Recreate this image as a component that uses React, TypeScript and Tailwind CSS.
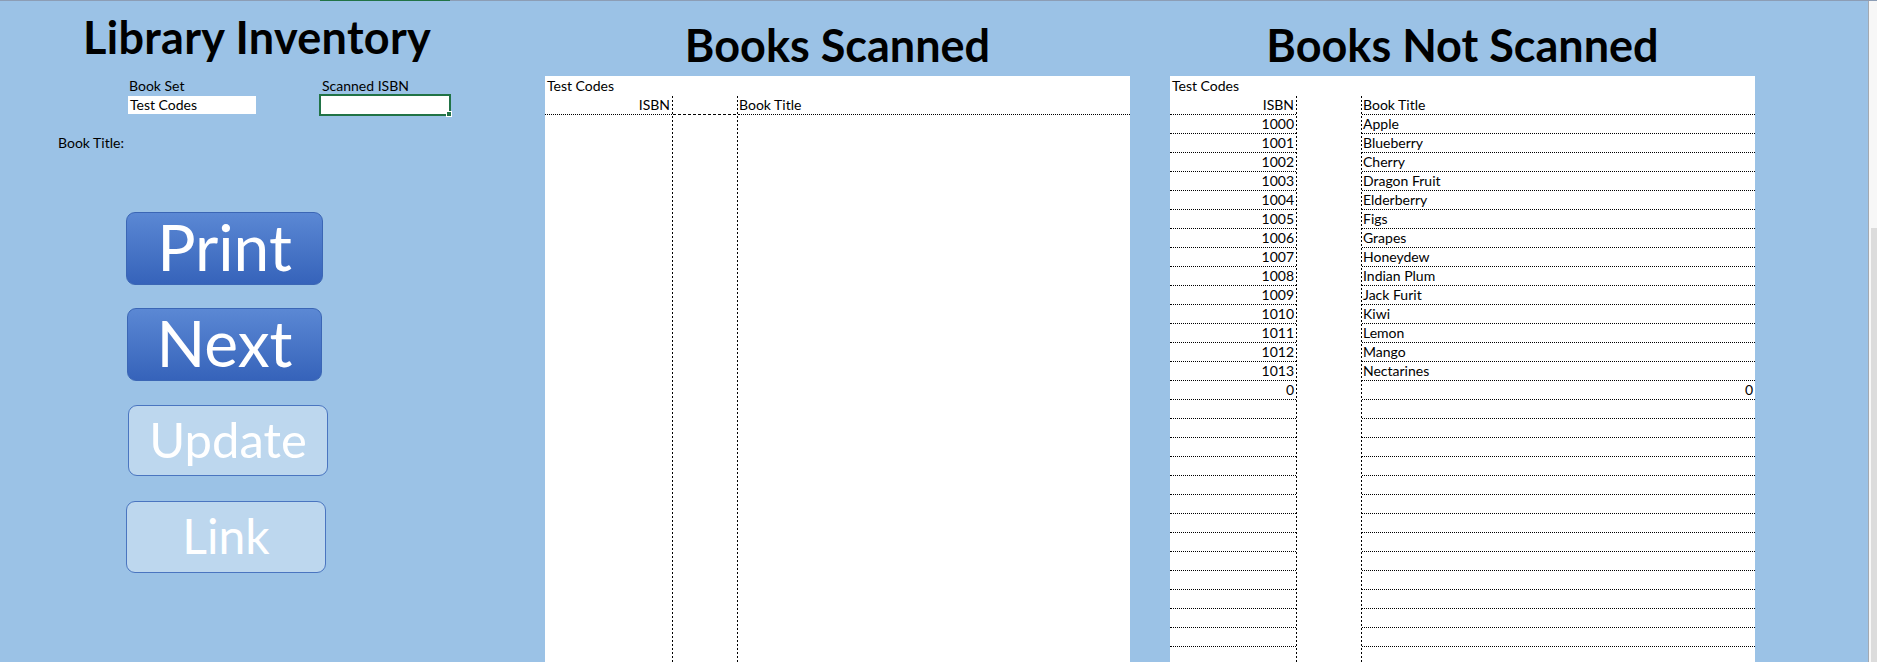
import React from "react";

const rows: [string, string][] = [
  ["1000", "Apple"],
  ["1001", "Blueberry"],
  ["1002", "Cherry"],
  ["1003", "Dragon Fruit"],
  ["1004", "Elderberry"],
  ["1005", "Figs"],
  ["1006", "Grapes"],
  ["1007", "Honeydew"],
  ["1008", "Indian Plum"],
  ["1009", "Jack Furit"],
  ["1010", "Kiwi"],
  ["1011", "Lemon"],
  ["1012", "Mango"],
  ["1013", "Nectarines"],
];

function VLine() {
  return (
    <div className="w-px shrink-0 [background-image:repeating-linear-gradient(to_bottom,#000_0px,#000_2px,transparent_2px,transparent_4px)]" />
  );
}

function Cell({ children, align }: { children?: React.ReactNode; align: "left" | "right" }) {
  return (
    <div
      className={
        align === "right"
          ? "h-[19px] shrink-0 border-b border-dotted border-black pr-[2px] text-right leading-[18px]"
          : "h-[19px] shrink-0 border-b border-dotted border-black pl-[1px] leading-[18px]"
      }
    >
      {children}
    </div>
  );
}

function BooksScanned() {
  return (
    <div className="flex w-[585px] shrink-0 flex-col">
      <div className="h-[75px] shrink-0 pt-[22px] text-center text-[45px] font-bold leading-[45px]">
        Books Scanned
      </div>
      <div className="flex flex-1 flex-col bg-white">
        <div className="h-[20px] shrink-0 pl-[2px] leading-[19px]">Test Codes</div>
        <div className="flex flex-1">
          <div className="w-[127px] shrink-0">
            <Cell align="right">ISBN</Cell>
          </div>
          <VLine />
          <div className="w-[64px] shrink-0">
            <div className="flex h-[19px] items-end">
              <div className="h-px w-full [background-image:repeating-linear-gradient(to_right,#000_0px,#000_3px,transparent_3px,transparent_5px)]" />
            </div>
          </div>
          <VLine />
          <div className="flex-1">
            <Cell align="left">Book Title</Cell>
          </div>
        </div>
      </div>
    </div>
  );
}

function BooksNotScanned() {
  const empty = Array.from({ length: 16 });
  return (
    <div className="flex w-[585px] shrink-0 flex-col">
      <div className="h-[75px] shrink-0 pt-[22px] text-center text-[45px] font-bold leading-[45px]">
        Books Not Scanned
      </div>
      <div className="flex flex-1 flex-col overflow-hidden bg-white">
        <div className="h-[20px] shrink-0 pl-[2px] leading-[19px]">Test Codes</div>
        <div className="flex flex-1">
          <div className="flex w-[126px] shrink-0 flex-col">
            <Cell align="right">ISBN</Cell>
            {rows.map(([n]) => (
              <Cell key={n} align="right">
                {n}
              </Cell>
            ))}
            <Cell align="right">0</Cell>
            {empty.map((_, i) => (
              <Cell key={i} align="right" />
            ))}
          </div>
          <VLine />
          <div className="w-[64px] shrink-0" />
          <VLine />
          <div className="flex flex-1 flex-col">
            <Cell align="left">Book Title</Cell>
            {rows.map(([n, t]) => (
              <Cell key={n} align="left">
                {t}
              </Cell>
            ))}
            <Cell align="right">0</Cell>
            {empty.map((_, i) => (
              <Cell key={i} align="left" />
            ))}
          </div>
        </div>
      </div>
    </div>
  );
}

function LeftPanel() {
  return (
    <div className="flex w-[545px] shrink-0 flex-col">
      <div className="h-[75px] shrink-0 pl-[83px] pt-[14px] text-[45px] font-bold leading-[45px] tracking-[0.3px]">
        Library Inventory
      </div>
      <div className="flex h-[19px] shrink-0 leading-[19px]">
        <div className="w-[193px] pl-[129px]">Book Set</div>
        <div className="pl-[129px]">Scanned ISBN</div>
      </div>
      <div className="flex h-[19px] shrink-0 items-start">
        <div className="ml-[128px] mt-px h-[18px] w-[128px] bg-white pl-[2px] leading-[18px]">Test Codes</div>
        <div className="relative ml-[63px] -mt-px h-[22px] w-[132px] border-2 border-[#217346] bg-white">
          <div className="absolute -bottom-[3px] -right-[3px] h-[6px] w-[6px] border border-white bg-[#217346]" />
        </div>
      </div>
      <div className="h-[19px] shrink-0" />
      <div className="h-[19px] shrink-0 pl-[58px] leading-[19px]">Book Title:</div>
      <div className="ml-[126px] mt-[60px] flex h-[73px] w-[197px] items-center justify-center rounded-[9px] border border-[#3b66b5] bg-gradient-to-b from-[#5b88d4] to-[#3663ba] pb-[3px] text-[64px] leading-none text-white">
        Print
      </div>
      <div className="ml-[127px] mt-[23px] flex h-[73px] w-[195px] items-center justify-center rounded-[9px] border border-[#3b66b5] bg-gradient-to-b from-[#5b88d4] to-[#3663ba] pb-[3px] text-[64px] leading-none text-white">
        Next
      </div>
      <div className="ml-[128px] mt-[24px] flex h-[71px] w-[200px] items-center justify-center rounded-[9px] border border-[#4a75c0] bg-[#bdd7ee] pb-[3px] text-[49px] leading-none text-white">
        Update
      </div>
      <div className="ml-[126px] mt-[25px] flex h-[72px] w-[200px] items-center justify-center rounded-[9px] border border-[#4a75c0] bg-[#bdd7ee] pb-[3px] text-[48px] leading-none text-white">
        Link
      </div>
    </div>
  );
}

export default function App() {
  return (
    <div className="flex h-[662px] w-[1877px] flex-col overflow-hidden bg-[#9bc2e6] font-['Lato',sans-serif] text-[14px] text-black">
      <div className="flex h-px shrink-0 bg-[#8c9db5]">
        <div className="w-[320px]" />
        <div className="w-[130px] bg-[#217346]" />
      </div>
      <div className="flex flex-1">
        <LeftPanel />
        <BooksScanned />
        <div className="w-[40px] shrink-0" />
        <BooksNotScanned />
        <div className="flex-1" />
        <div className="flex w-[9px] shrink-0 flex-col border-l border-[#a3a9b1] bg-[#f7f7f7]">
          <div className="h-[227px]" />
          <div className="ml-[2px] flex-1 bg-[#dcdcdc]" />
        </div>
      </div>
    </div>
  );
}
